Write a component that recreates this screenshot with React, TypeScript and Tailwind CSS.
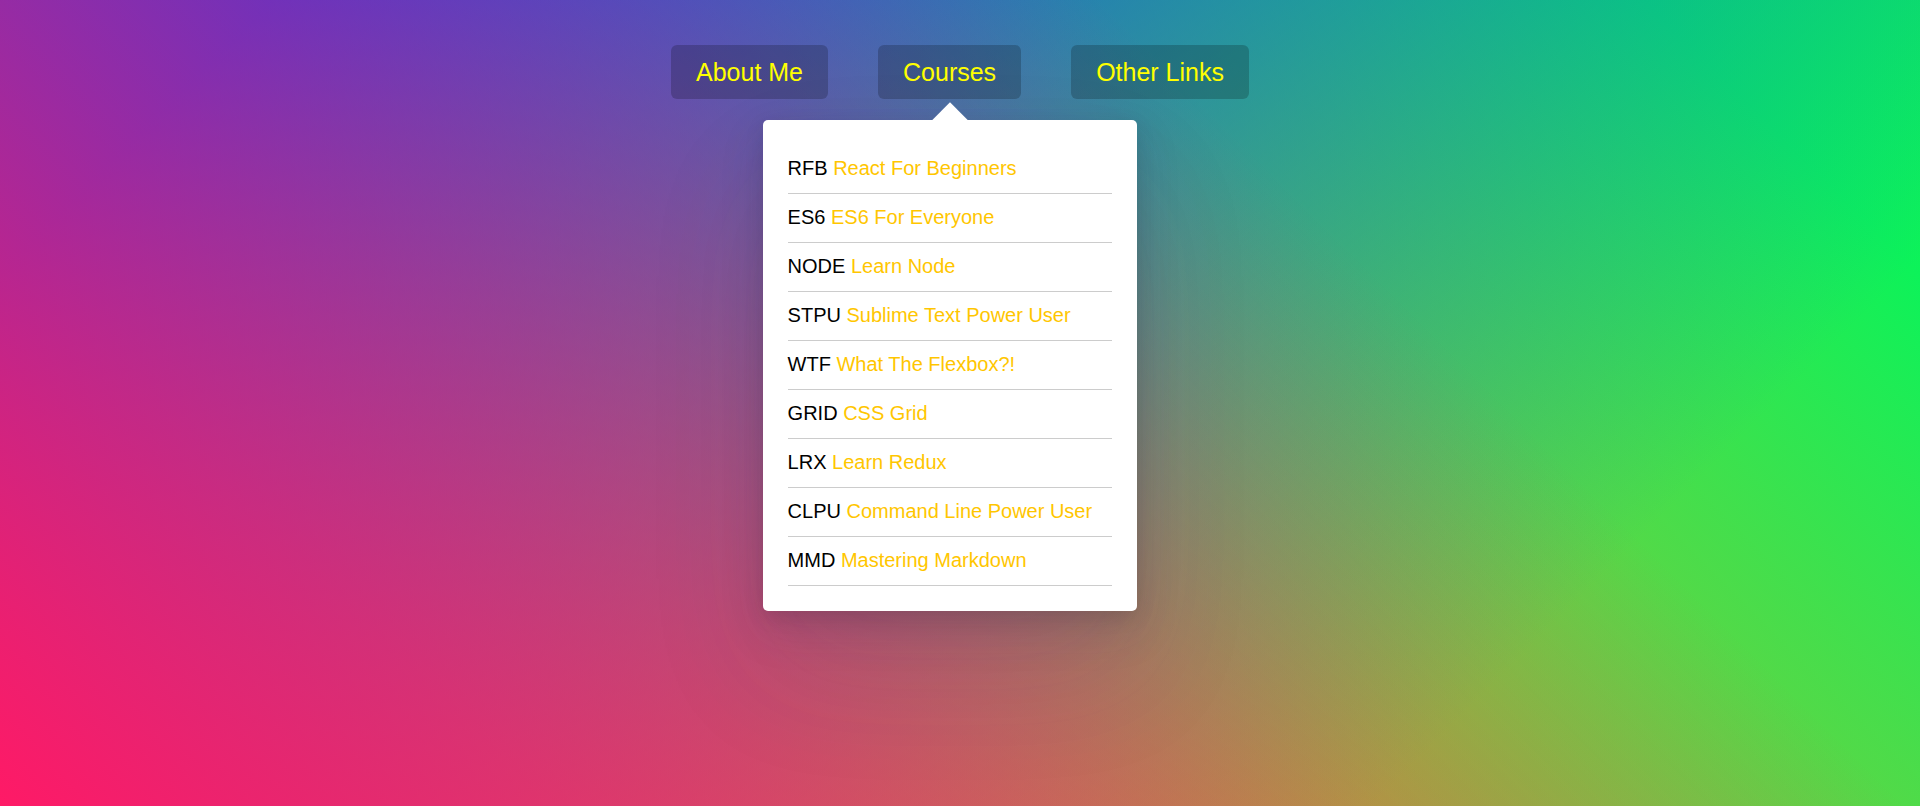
import React from "react";

const courses: [string, string][] = [
  ["RFB", "React For Beginners"],
  ["ES6", "ES6 For Everyone"],
  ["NODE", "Learn Node"],
  ["STPU", "Sublime Text Power User"],
  ["WTF", "What The Flexbox?!"],
  ["GRID", "CSS Grid"],
  ["LRX", "Learn Redux"],
  ["CLPU", "Command Line Power User"],
  ["MMD", "Mastering Markdown"],
];

function NavLink({ children }: { children: React.ReactNode }) {
  return (
    <a
      href="#"
      className="m-[25px] inline-block rounded-[6px] bg-black/20 px-[25px] py-[12.5px] text-[25px] leading-[28.75px] text-[#ffff00] no-underline"
    >
      {children}
    </a>
  );
}

export default function App() {
  return (
    <div
      className="h-screen w-full overflow-hidden [background-image:linear-gradient(45deg,hsla(340,100%,55%,1)_0%,hsla(340,100%,55%,0)_70%),linear-gradient(135deg,hsla(225,95%,50%,1)_10%,hsla(225,95%,50%,0)_80%),linear-gradient(225deg,hsla(140,90%,50%,1)_10%,hsla(140,90%,50%,0)_80%),linear-gradient(315deg,hsla(35,95%,55%,1)_100%,hsla(35,95%,55%,0)_70%)]"
      style={{ fontFamily: '"Liberation Sans", Arial, sans-serif' }}
    >
      <nav className="relative pt-5">
        <ul className="m-0 flex list-none justify-center p-0">
          <li className="relative flex justify-center">
            <NavLink>About Me</NavLink>
          </li>
          <li className="relative flex justify-center">
            <NavLink>Courses</NavLink>
            <div className="absolute left-1/2 top-[100px] w-[374px] -translate-x-1/2 rounded-[5px] bg-white p-[25px] shadow-[0_62px_125px_rgba(50,50,93,0.1),0_19px_44px_rgba(50,50,93,0.15),0_6px_19px_rgba(0,0,0,0.1)]">
              <span className="absolute left-1/2 top-0 block h-[25px] w-[25px] -translate-x-1/2 -translate-y-1/2 rotate-45 bg-white" />
              <ul className="relative m-0 list-none p-0">
                {courses.map(([code, name]) => (
                  <li
                    key={code}
                    className="block border-b border-black/20 pt-[12px] pb-[13px] text-[20px] leading-[23px] text-black"
                  >
                    {code}{" "}
                    <a href="#" className="text-[#ffc600] no-underline">
                      {name}
                    </a>
                  </li>
                ))}
              </ul>
            </div>
          </li>
          <li className="relative flex justify-center">
            <NavLink>Other Links</NavLink>
          </li>
        </ul>
      </nav>
    </div>
  );
}
